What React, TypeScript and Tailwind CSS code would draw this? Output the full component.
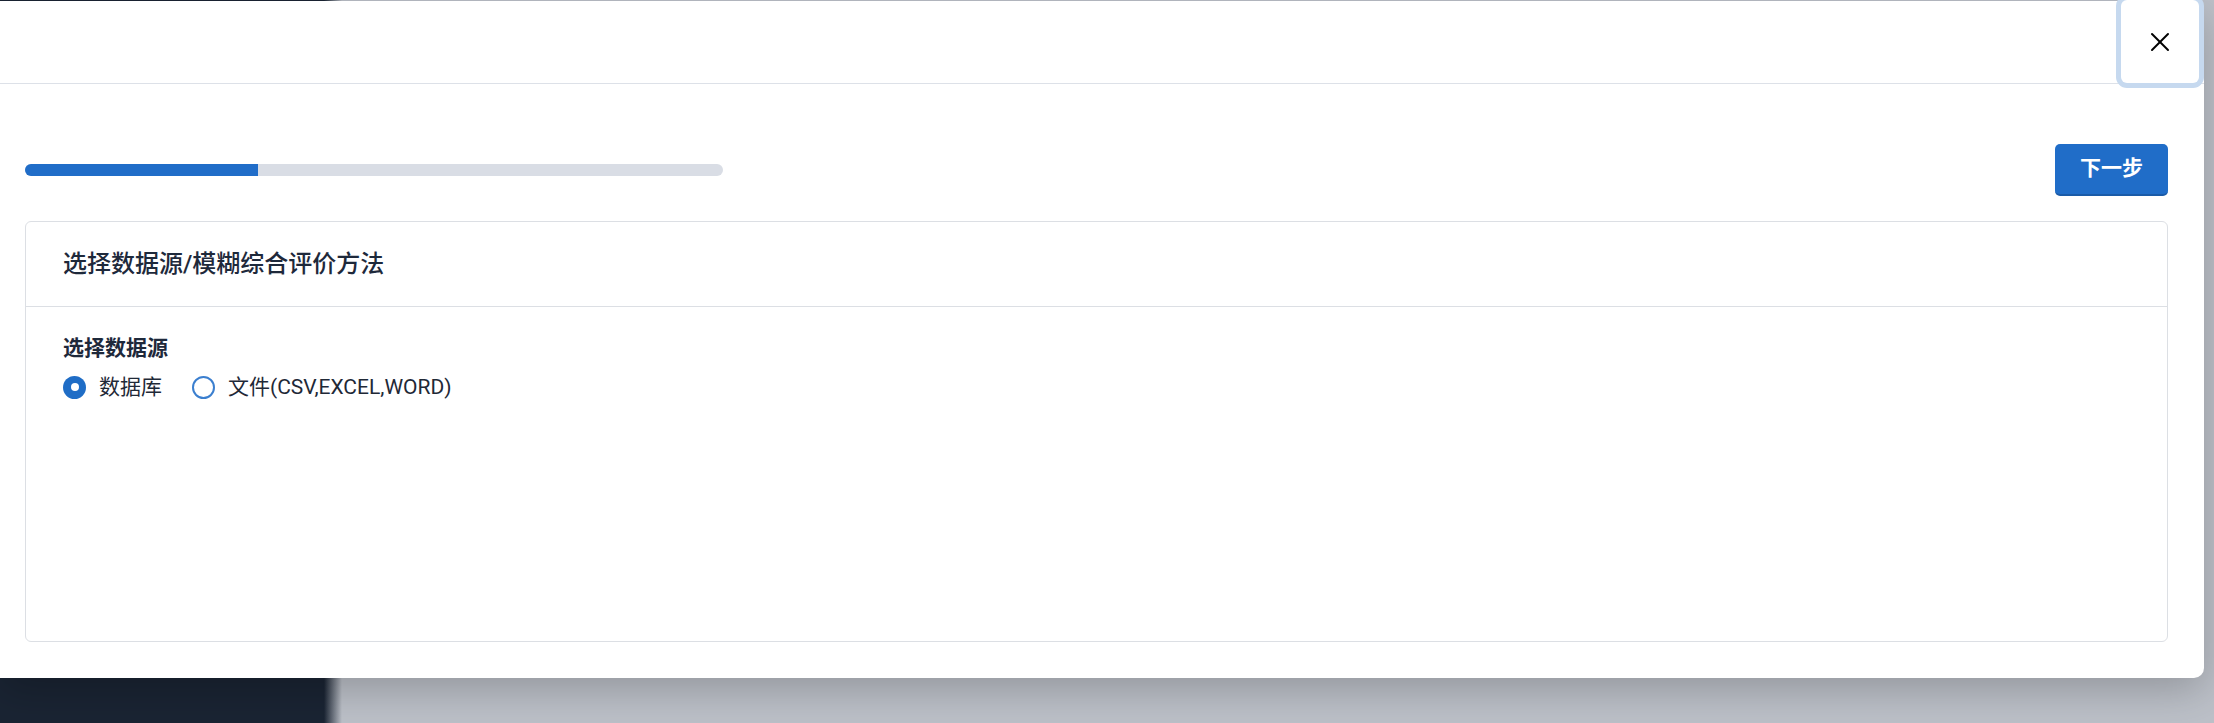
import React, { useState } from "react";
import { X } from "lucide-react";

/* ---------------- DATA ---------------- */
const SOURCES = [
  { id: "db", label: "数据库" },
  { id: "file", label: "文件(CSV,EXCEL,WORD)" },
];

const FONT = "font-['Roboto','Noto_Sans_CJK_SC',sans-serif]";

/* ---------------- RADIO ---------------- */
const Radio: React.FC<{ checked: boolean; label: string; onClick: () => void }> = ({
  checked,
  label,
  onClick,
}) => (
  <label className="flex items-center gap-[13px] cursor-pointer" onClick={onClick}>
    {checked ? (
      <span className="w-[23px] h-[23px] rounded-full bg-[#1f6dc6] flex items-center justify-center">
        <span className="w-[8px] h-[8px] rounded-full bg-white" />
      </span>
    ) : (
      <span className="w-[23px] h-[23px] rounded-full border-2 border-[#3b7fcf] bg-white" />
    )}
    <span className="text-[21px] text-[#1f2937] leading-[28px]">{label}</span>
  </label>
);

/* ---------------- APP ---------------- */
export default function App() {
  const [source, setSource] = useState("db");
  const step = 1;
  const total = 3;

  return (
    <div className={`relative w-full h-[723px] overflow-hidden ${FONT}`}>
      {/* backdrop: sidebar + dimmed page */}
      <div className="absolute inset-0 bg-[linear-gradient(to_right,#1a2433_324px,#bcc0c8_342px)]" />

      {/* Modal */}
      <div className="absolute left-0 top-[1px] w-[2204px] h-[677px] bg-white rounded-r-[10px] shadow-[0_12px_40px_rgba(0,0,0,0.22)] flex flex-col">
        {/* Header */}
        <div className="h-[83px] border-b border-[#dde1e8] flex justify-end items-start shrink-0">
          <button className="-mt-[1px] mr-[5px] w-[78px] h-[83px] bg-white rounded-[6px] ring-[5px] ring-[#c6d9ef] flex items-center justify-center text-black">
            <X size={32} strokeWidth={1.5} />
          </button>
        </div>

        {/* Body */}
        <div className="flex-1 flex flex-col pl-[25px] pr-[36px] pt-[60px] pb-[36px]">
          <div className="flex items-center justify-between">
            <div className="w-[698px] h-[12px] rounded-full bg-[#d9dde5] overflow-hidden">
              <div
                className="h-full bg-[#206dc8]"
                style={{ width: `${(step / total) * 100}%` }}
              />
            </div>
            <button className="w-[113px] h-[52px] rounded-[5px] bg-[#206dc8] border-b-2 border-[#1a5ba8] text-white text-[21px] font-semibold">
              下一步
            </button>
          </div>

          {/* Card */}
          <div className="mt-[25px] flex-1 border border-[#dcdfe4] rounded-[6px] flex flex-col">
            <div className="h-[85px] border-b border-[#dcdfe4] flex items-center px-[37px]">
              <h2 className="text-[24px] font-medium text-[#1e293b]">选择数据源/模糊综合评价方法</h2>
            </div>
            <div className="px-[37px] pt-[27px]">
              <div className="text-[21px] font-semibold text-[#1e293b] leading-[28px]">选择数据源</div>
              <div className="mt-[11px] flex items-center gap-[30px]">
                {SOURCES.map((s) => (
                  <Radio
                    key={s.id}
                    checked={source === s.id}
                    label={s.label}
                    onClick={() => setSource(s.id)}
                  />
                ))}
              </div>
            </div>
          </div>
        </div>
      </div>
    </div>
  );
}
